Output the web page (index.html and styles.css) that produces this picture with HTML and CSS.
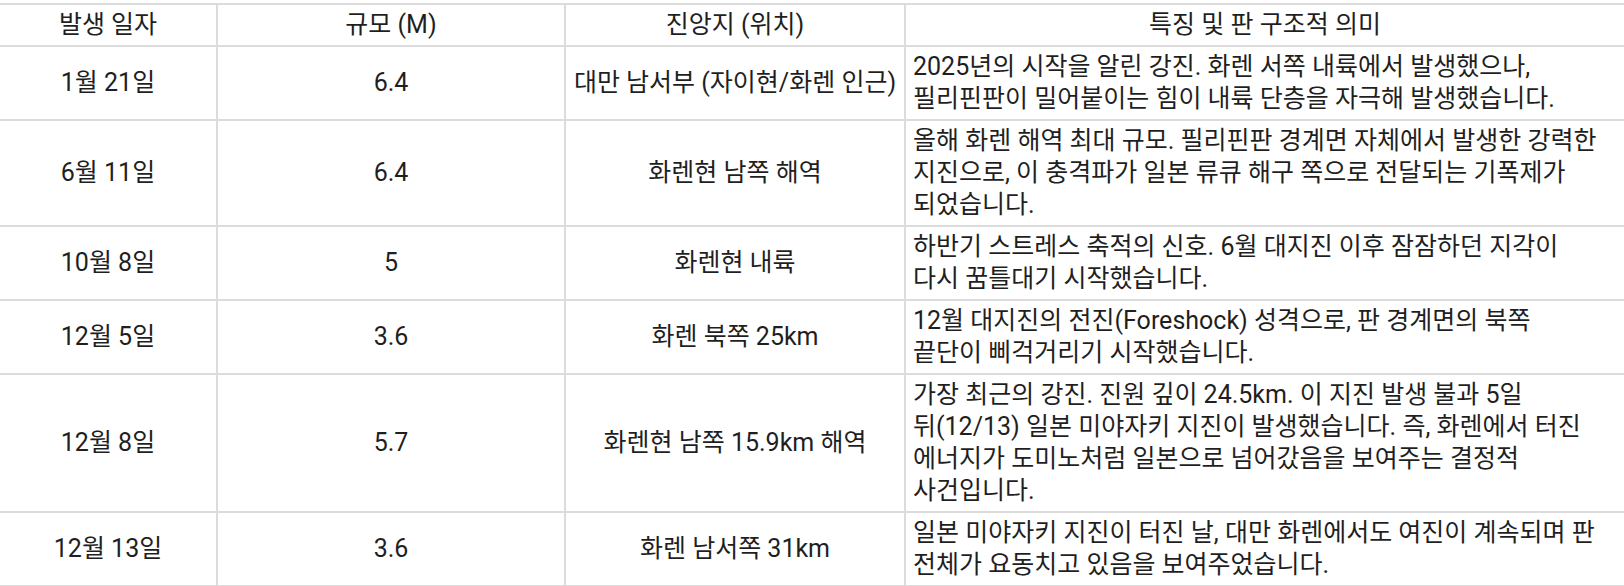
FILE: index.html
```html
<!DOCTYPE html>
<html lang="ko">
<head>
<meta charset="utf-8">
<title>2025 대만 화렌 지진</title>
<link rel="stylesheet" href="styles.css">
</head>
<body>
<table class="quake-table">
  <colgroup>
    <col class="c-date">
    <col class="c-mag">
    <col class="c-loc">
    <col class="c-desc">
  </colgroup>
  <thead>
    <tr>
      <th>발생 일자</th>
      <th>규모 (M)</th>
      <th>진앙지 (위치)</th>
      <th>특징 및 판 구조적 의미</th>
    </tr>
  </thead>
  <tbody>
    <tr>
      <td>1월 21일</td>
      <td>6.4</td>
      <td>대만 남서부 (자이현/화렌 인근)</td>
      <td class="desc">2025년의 시작을 알린 강진. 화렌 서쪽 내륙에서 발생했으나,<br>필리핀판이 밀어붙이는 힘이 내륙 단층을 자극해 발생했습니다.</td>
    </tr>
    <tr>
      <td>6월 11일</td>
      <td>6.4</td>
      <td>화렌현 남쪽 해역</td>
      <td class="desc">올해 화렌 해역 최대 규모. 필리핀판 경계면 자체에서 발생한 강력한<br>지진으로, 이 충격파가 일본 류큐 해구 쪽으로 전달되는 기폭제가<br>되었습니다.</td>
    </tr>
    <tr>
      <td>10월 8일</td>
      <td>5</td>
      <td>화렌현 내륙</td>
      <td class="desc">하반기 스트레스 축적의 신호. 6월 대지진 이후 잠잠하던 지각이<br>다시 꿈틀대기 시작했습니다.</td>
    </tr>
    <tr>
      <td>12월 5일</td>
      <td>3.6</td>
      <td>화렌 북쪽 25km</td>
      <td class="desc">12월 대지진의 전진(Foreshock) 성격으로, 판 경계면의 북쪽<br>끝단이 삐걱거리기 시작했습니다.</td>
    </tr>
    <tr>
      <td>12월 8일</td>
      <td>5.7</td>
      <td>화렌현 남쪽 15.9km 해역</td>
      <td class="desc">가장 최근의 강진. 진원 깊이 24.5km. 이 지진 발생 불과 5일<br>뒤(12/13) 일본 미야자키 지진이 발생했습니다. 즉, 화렌에서 터진<br>에너지가 도미노처럼 일본으로 넘어갔음을 보여주는 결정적<br>사건입니다.</td>
    </tr>
    <tr>
      <td>12월 13일</td>
      <td>3.6</td>
      <td>화렌 남서쪽 31km</td>
      <td class="desc">일본 미야자키 지진이 터진 날, 대만 화렌에서도 여진이 계속되며 판<br>전체가 요동치고 있음을 보여주었습니다.</td>
    </tr>
  </tbody>
</table>
</body>
</html>
```

FILE: styles.css
```css
html, body {
  margin: 0;
  padding: 0;
  background: #ffffff;
}

body {
  padding-top: 3px;
  font-family: Roboto, "Noto Sans CJK KR", "Noto Sans", sans-serif;
  color: #1f1f1f;
  overflow: hidden;
}

.quake-table {
  width: 1624px;
  border-collapse: collapse;
  table-layout: fixed;
  font-size: 25px;
  line-height: 32px;
}

.c-date { width: 217px; }
.c-mag { width: 348px; }
.c-loc { width: 340px; }
.c-desc { width: 719px; }

.quake-table th,
.quake-table td {
  border: 2px solid #dcdcdc;
  padding: 4px 6px;
  text-align: center;
  vertical-align: middle;
  font-weight: 400;
  white-space: nowrap;
}

.quake-table th:first-child,
.quake-table td:first-child {
  border-left: none;
}

.quake-table th:last-child,
.quake-table td:last-child {
  border-right: none;
}

.quake-table td.desc {
  text-align: left;
  padding-left: 7px;
}
```
